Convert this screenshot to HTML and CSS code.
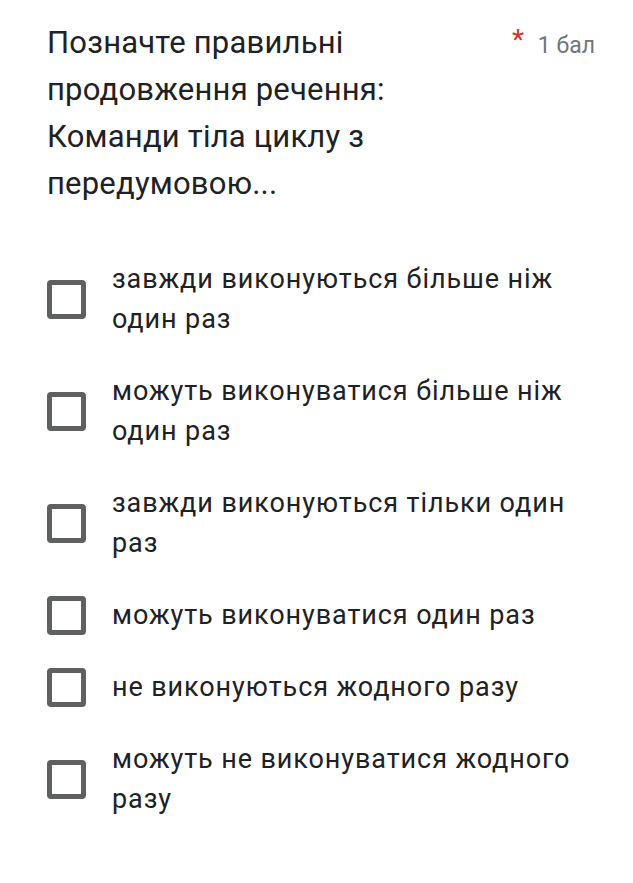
FILE: index.html
```html
<!DOCTYPE html>
<html lang="uk">
<head>
    <meta charset="UTF-8">
    <meta name="viewport" content="width=device-width, initial-scale=1.0">
    <title>Питання</title>
    <link rel="stylesheet" href="styles.css">
</head>
<body>

<div class="question">
    <div class="question-head">
        <div class="question-title">Позначте правильні продовження речення: Команди тіла циклу з передумовою...</div>
        <div class="question-points"><span class="required">*</span> 1 бал</div>
    </div>

    <div class="options">
        <label class="option"><span class="box"></span><span class="option-text">завжди виконуються більше ніж один раз</span></label>
        <label class="option"><span class="box"></span><span class="option-text">можуть виконуватися більше ніж один раз</span></label>
        <label class="option"><span class="box"></span><span class="option-text">завжди виконуються тільки один раз</span></label>
        <label class="option"><span class="box"></span><span class="option-text">можуть виконуватися один раз</span></label>
        <label class="option"><span class="box"></span><span class="option-text">не виконуються жодного разу</span></label>
        <label class="option"><span class="box"></span><span class="option-text">можуть не виконуватися жодного разу</span></label>
    </div>
</div>

</body>
</html>
```

FILE: styles.css
```css
body {
    margin: 0;
    background-color: #fff;
    font-family: Roboto, "Liberation Sans", sans-serif;
    color: #202124;
}
.question {
    padding: 19px 38px 40px 47px;
}
.question-head {
    display: flex;
    align-items: baseline;
    justify-content: space-between;
}
.question-title {
    max-width: 420px;
    font-size: 31px;
    line-height: 47px;
    letter-spacing: 0.2px;
}
.question-points {
    font-size: 23px;
    color: #70757a;
    white-space: nowrap;
}
.required {
    color: #d93025;
    font-size: 28px;
    margin-right: 8px;
    vertical-align: 4px;
}
.options {
    display: flex;
    flex-direction: column;
    gap: 32px;
    margin-top: 52px;
}
.option {
    display: flex;
    align-items: center;
    gap: 26px;
}
.box {
    flex: none;
    width: 29px;
    height: 29px;
    border: 5px solid #5f6060;
    border-radius: 4px;
}
.option-text {
    font-size: 27px;
    line-height: 40px;
    letter-spacing: 0.9px;
}
```
